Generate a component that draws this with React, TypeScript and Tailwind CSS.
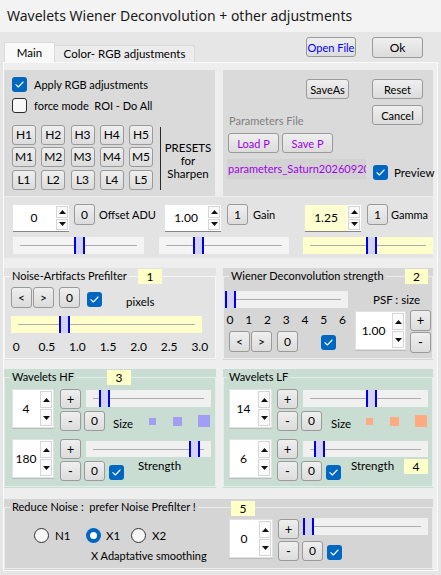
import React from "react";

type P = { className?: string; children?: React.ReactNode };

function Btn({ className = "", children }: P) {
  return (
    <div
      className={`flex shrink-0 items-center justify-center whitespace-nowrap rounded-[3px] border border-[#9a9a9a] bg-linear-to-b from-[#efefef] to-[#dcdcdc] leading-none ${className}`}
    >
      {children}
    </div>
  );
}

function Check({ className = "" }: { className?: string }) {
  return (
    <div
      className={`flex h-[15px] w-[15px] shrink-0 items-center justify-center rounded-[3px] bg-[#0067c0] ${className}`}
    >
      <svg width="9" height="7" viewBox="0 0 9 7" fill="none">
        <path
          d="M0.9 3.7 3.3 6 8.1 1"
          stroke="#ffffff"
          strokeWidth="1.1"
          strokeLinecap="round"
          strokeLinejoin="round"
        />
      </svg>
    </div>
  );
}

function Box({ className = "" }: { className?: string }) {
  return (
    <div
      className={`h-[15px] w-[15px] shrink-0 rounded-[3px] border border-[#2b2b2b] bg-[#f7f7f7] ${className}`}
    />
  );
}

function Radio({ on = false, className = "" }: { on?: boolean; className?: string }) {
  return on ? (
    <div
      className={`flex h-[15px] w-[15px] shrink-0 items-center justify-center rounded-full bg-[#0067c0] ${className}`}
    >
      <div className="h-[7px] w-[7px] rounded-full bg-white" />
    </div>
  ) : (
    <div
      className={`h-[15px] w-[15px] shrink-0 rounded-full border border-[#333333] bg-[#f6f6f6] ${className}`}
    />
  );
}

function Tri({ down = false }: { down?: boolean }) {
  return (
    <svg width="7" height="4" viewBox="0 0 7 4">
      <path d={down ? "M0 0h7L3.5 4z" : "M0 4h7L3.5 0z"} fill="#111111" />
    </svg>
  );
}

function Spin({
  value,
  className = "",
  numClass = "bg-white",
  flat = false,
}: {
  value: string;
  className?: string;
  numClass?: string;
  flat?: boolean;
}) {
  return (
    <div
      className={`flex shrink-0 bg-white ${
        flat ? "border-b border-[#858585]" : "border border-[#e2e2e2] shadow-[0_1px_0_#bdbdbd]"
      } ${className}`}
    >
      <div className={`flex flex-1 items-center justify-center text-[12px] ${numClass}`}>{value}</div>
      <div className="flex w-[14px] flex-col gap-px p-px">
        <div className="flex flex-1 items-center justify-center border border-[#d6d6d6] bg-[#fafafa]">
          <Tri />
        </div>
        <div className="flex flex-1 items-center justify-center border border-[#d6d6d6] bg-[#fafafa]">
          <Tri down />
        </div>
      </div>
    </div>
  );
}

function Slider({ className = "", left }: { className?: string; left: number }) {
  return (
    <div className={`relative flex shrink-0 items-center px-[7px] ${className}`}>
      <div className="h-px flex-1 bg-[#adadad]" />
      <div
        className="absolute bottom-0 top-0 w-[11px] border-x-2 border-[#0000e6] bg-[#d2d2fa]"
        style={{ left }}
      />
    </div>
  );
}

function Badge({ className = "", children }: P) {
  return (
    <div className={`absolute flex items-center justify-center bg-[#ffffc8] text-[12px] ${className}`}>
      {children}
    </div>
  );
}

const presets = ["H1", "H2", "H3", "H4", "H5", "M1", "M2", "M3", "M4", "M5", "L1", "L2", "L3", "L4", "L5"];
const prefilterScale = ["0", "0.5", "1.0", "1.5", "2.0", "2.5", "3.0"];
const wienerScale = ["0", "1", "2", "3", "4", "5", "6"];

function Squares({ color, size }: { color: string; size: string }) {
  return (
    <>
      <span className={`${size} shrink-0`}>Size</span>
      <div className={`h-[7px] w-[7px] shrink-0 ${color}`} />
      <div className={`ml-[17px] h-[9px] w-[9px] shrink-0 ${color}`} />
      <div className={`ml-[16px] h-[12px] w-[12px] shrink-0 ${color}`} />
    </>
  );
}

export default function App() {
  return (
    <div className="flex h-[575px] w-[441px] select-none flex-col overflow-hidden bg-[#e6e6e6] font-['Lato',sans-serif] text-[11px] leading-[14px] text-black">
      {/* window caption */}
      <div className="flex h-[32px] shrink-0 items-center bg-[#f3f3f3] pl-[7px] font-['Noto_Sans',sans-serif] text-[14px] text-[#1a1a1a]">
        Wavelets Wiener Deconvolution + other adjustments
      </div>

      {/* tab strip + top buttons */}
      <div className="flex h-[30px] shrink-0">
        <div className="ml-[4px] flex items-end">
          <div className="flex h-[20px] w-[51px] items-center justify-center border-x border-t border-[#dadada] bg-[#f9f9f9] text-[11.5px]">
            Main
          </div>
          <div className="flex h-[17px] w-[140px] items-center justify-center whitespace-nowrap border-r border-t border-[#dadada] bg-[#ececec] text-[11.5px]">
            Color- RGB adjustments
          </div>
        </div>
        <Btn className="ml-[111px] mt-[5px] h-[20px] w-[50px] text-[#0000ff]">Open File</Btn>
        <Btn className="ml-[16px] mt-[5px] h-[21px] w-[51px] text-[12px]">Ok</Btn>
      </div>

      {/* tab page */}
      <div className="ml-[3px] flex h-[509px] w-[435px] shrink-0 flex-col border border-[#fafafa] bg-[#eeeeee]">
        {/* top panels */}
        <div className="mt-[7px] flex gap-[8px]">
          <div className="flex h-[126px] w-[211px] flex-col bg-[#dadada] pl-[8px] pt-[7px]">
            <div className="flex h-[15px] items-center">
              <Check />
              <span className="ml-[7px] whitespace-nowrap">Apply RGB adjustments</span>
            </div>
            <div className="mt-[6px] flex h-[15px] items-center">
              <Box />
              <span className="ml-[7px] whitespace-pre">force mode  ROI - Do All</span>
            </div>
            <div className="mt-[12px] flex">
              <div className="grid grid-cols-[repeat(5,24px)] gap-x-[5.25px] gap-y-[2px]">
                {presets.map((p) => (
                  <Btn key={p} className="h-[20px] text-[12px]">
                    {p}
                  </Btn>
                ))}
              </div>
              <div className="ml-[7px] mt-[2px] h-[63px] w-px bg-[#2a2a2a]" />
              <div className="flex-1 pt-[16px] text-center text-[11.5px] leading-[13px]">
                PRESETS
                <br />
                for
                <br />
                Sharpen
              </div>
            </div>
          </div>

          <div className="flex h-[126px] w-[210px] bg-[#dadada] pl-[5px]">
            <div className="flex w-[139px] flex-col">
              <Btn className="ml-[78px] mt-[9px] h-[20px] w-[43px]">SaveAs</Btn>
              <div className="ml-px mt-[15px] whitespace-nowrap text-[#808080]">Parameters File</div>
              <div className="mt-[5px] flex gap-[3px]">
                <Btn className="h-[20px] w-[51px] text-[#a000e8]">Load P</Btn>
                <Btn className="h-[20px] w-[51px] text-[#a000e8]">Save P</Btn>
              </div>
              <div className="-ml-px mt-[6px] flex h-[20px] w-[139px] items-center overflow-hidden whitespace-nowrap bg-[#d2d2d2] pl-px text-[#a000e8]">
                parameters_Saturn20260920_1.txt
              </div>
            </div>
            <div className="ml-[5px] flex w-[51px] flex-col">
              <Btn className="mt-[9px] h-[20px] w-[51px]">Reset</Btn>
              <Btn className="mt-[6px] h-[20px] w-[51px]">Cancel</Btn>
              <div className="ml-px mt-[40px] flex items-center">
                <Check />
                <span className="ml-[6px] text-[11.5px]">Preview</span>
              </div>
            </div>
          </div>
        </div>

        {/* offset / gain / gamma */}
        <div className="mt-px flex h-[61px] w-[429px] flex-col bg-[#e3e3e3] pt-[7px]">
          <div className="flex h-[28px] items-start">
            <div className="ml-[9px] flex w-[152px] items-start">
              <Spin flat value="0" className="mt-px h-[27px] w-[56px]" />
              <Btn className="ml-[5px] h-[21px] w-[21px] text-[12px]">0</Btn>
              <span className="ml-[4px] mt-[4px] whitespace-nowrap">Offset ADU</span>
            </div>
            <div className="flex w-[140px] items-start">
              <Spin flat value="1.00" className="mt-px h-[27px] w-[56px]" />
              <Btn className="ml-[6px] h-[21px] w-[21px] text-[12px]">1</Btn>
              <span className="ml-[5px] mt-[4px]">Gain</span>
            </div>
            <div className="flex items-start">
              <Spin flat value="1.25" numClass="bg-[#ffffd2]" className="mt-px h-[27px] w-[56px]" />
              <Btn className="ml-[6px] h-[21px] w-[21px] text-[12px]">1</Btn>
              <span className="ml-[3px] mt-[4px]">Gamma</span>
            </div>
          </div>
          <div className="mt-[5px] flex">
            <Slider left={61} className="ml-[9px] h-[17px] w-[131px] bg-[#f4f4f4]" />
            <Slider left={34} className="ml-[15px] h-[17px] w-[130px] bg-[#f4f4f4]" />
            <Slider left={63} className="ml-[14px] h-[17px] w-[130px] bg-[#ffffcc]" />
          </div>
        </div>

        {/* prefilter + wiener */}
        <div className="mt-[10px] flex gap-[7px]">
          <div className="relative h-[92px] w-[212px] bg-[#e3e3e3]">
            <fieldset className="mt-px h-[90px] min-w-0 border border-[#f7f7f7]">
              <legend className="ml-[5px] whitespace-nowrap px-[2px]">Noise-Artifacts Prefilter</legend>
              <div className="mt-[4px] flex items-start text-[12px]">
                <Btn className="ml-[6px] h-[21px] w-[21px]">&lt;</Btn>
                <Btn className="ml-px h-[21px] w-[21px]">&gt;</Btn>
                <Btn className="ml-[5px] h-[21px] w-[21px]">0</Btn>
                <Check className="ml-[7px] mt-[5px]" />
                <span className="ml-[24px] mt-[8px] text-[11.5px]">pixels</span>
              </div>
              <Slider left={48} className="ml-[6px] mt-[7px] h-[17px] w-[191px] bg-[#ffffcc]" />
              <div className="-ml-[4px] mt-[7px] flex text-[12px]">
                {prefilterScale.map((s) => (
                  <span key={s} className="w-[31px] text-center">
                    {s}
                  </span>
                ))}
              </div>
            </fieldset>
            <Badge className="left-[134px] top-px h-[15px] w-[24px]">1</Badge>
          </div>

          <div className="relative h-[92px] w-[210px] bg-[#d6d6d6]">
            <fieldset className="mt-px h-[90px] min-w-0 border border-[#ececec]">
              <legend className="ml-[5px] whitespace-nowrap px-[2px]">Wiener Deconvolution strength</legend>
              <div className="flex">
                <div className="flex w-[128px] flex-col">
                  <Slider left={0} className="ml-px mt-[8px] h-[17px] w-[123px] bg-[#f0f0f0]" />
                  <div className="-ml-[3.5px] mt-[5px] flex text-[12px]">
                    {wienerScale.map((s) => (
                      <span key={s} className="w-[19px] text-center">
                        {s}
                      </span>
                    ))}
                  </div>
                  <div className="mt-[4px] flex items-start text-[12px]">
                    <Btn className="ml-[5px] h-[21px] w-[21px]">&lt;</Btn>
                    <Btn className="ml-px h-[21px] w-[21px]">&gt;</Btn>
                    <Btn className="ml-[5px] h-[21px] w-[21px]">0</Btn>
                    <Check className="ml-[23px] mt-[4px]" />
                  </div>
                </div>
                <div className="flex flex-col">
                  <span className="ml-[21px] mt-[10px] whitespace-nowrap text-[11.5px]">PSF : size</span>
                  <div className="mt-[4px] flex">
                    <Spin value="1.00" className="ml-[3px] h-[39px] w-[51px]" />
                    <div className="-mt-px ml-[4px] flex flex-col gap-px text-[13px]">
                      <Btn className="h-[21px] w-[21px]">+</Btn>
                      <Btn className="h-[21px] w-[21px]">-</Btn>
                    </div>
                  </div>
                </div>
              </div>
            </fieldset>
            <Badge className="left-[182px] top-px h-[15px] w-[23px]">2</Badge>
          </div>
        </div>

        {/* wavelets */}
        <div className="mt-[9px] flex gap-[7px]">
          <div className="relative h-[119px] w-[212px] bg-[#c9ddd3]">
            <fieldset className="mt-px h-[117px] min-w-0 border border-[#e2eee8]">
              <legend className="ml-[5px] whitespace-nowrap px-[2px]">Wavelets HF</legend>
              <div className="mt-[5px] flex items-start">
                <Spin value="4" className="ml-[7px] h-[39px] w-[42px]" />
                <div className="ml-[6px] flex flex-col">
                  <div className="flex items-start">
                    <Btn className="h-[20px] w-[21px] text-[13px]">+</Btn>
                    <Slider left={13} className="ml-[5px] mt-px h-[17px] w-[125px] bg-[#f0f0f0]" />
                  </div>
                  <div className="mt-[2px] flex items-center">
                    <Btn className="h-[20px] w-[21px] text-[13px]">-</Btn>
                    <Btn className="ml-[3px] h-[20px] w-[21px] text-[12px]">0</Btn>
                    <div className="ml-[8px]" />
                    <Squares color="bg-[#a29ef5]" size="w-[36px] pt-[5px] text-[11.5px]" />
                  </div>
                </div>
              </div>
              <div className="mt-[8px] flex items-start">
                <Spin value="180" className="ml-[7px] h-[39px] w-[42px]" />
                <div className="ml-[6px] flex flex-col">
                  <div className="flex items-start">
                    <Btn className="h-[20px] w-[21px] text-[13px]">+</Btn>
                    <Slider left={103} className="ml-[5px] mt-[2px] h-[16px] w-[125px] bg-[#f0f0f0]" />
                  </div>
                  <div className="mt-[2px] flex items-start">
                    <Btn className="h-[20px] w-[21px] text-[13px]">-</Btn>
                    <Btn className="ml-[3px] h-[20px] w-[21px] text-[12px]">0</Btn>
                    <Check className="ml-[4px] mt-[4px]" />
                    <span className="-mt-[2px] ml-[14px] text-[11.5px]">Strength</span>
                  </div>
                </div>
              </div>
            </fieldset>
            <Badge className="left-[103px] top-px h-[15px] w-[24px]">3</Badge>
          </div>

          <div className="relative h-[119px] w-[210px] bg-[#c9ddd3]">
            <fieldset className="mt-px h-[117px] min-w-0 border border-[#e2eee8]">
              <legend className="ml-[3px] whitespace-nowrap px-[2px]">Wavelets LF</legend>
              <div className="mt-[5px] flex items-start">
                <Spin value="14" className="ml-[5px] h-[39px] w-[43px]" />
                <div className="ml-[5px] flex flex-col">
                  <div className="flex items-start">
                    <Btn className="h-[20px] w-[21px] text-[13px]">+</Btn>
                    <Slider left={63} className="ml-[5px] mt-px h-[17px] w-[125px] bg-[#f0f0f0]" />
                  </div>
                  <div className="mt-[2px] flex items-center">
                    <Btn className="h-[20px] w-[21px] text-[13px]">-</Btn>
                    <Btn className="ml-[3px] h-[20px] w-[21px] text-[12px]">0</Btn>
                    <div className="ml-[9px]" />
                    <Squares color="bg-[#ffaa80]" size="w-[35px] pt-[5px] text-[11.5px]" />
                  </div>
                </div>
              </div>
              <div className="mt-[8px] flex items-start">
                <Spin value="6" className="ml-[5px] h-[39px] w-[43px]" />
                <div className="ml-[5px] flex flex-col">
                  <div className="flex items-start">
                    <Btn className="h-[20px] w-[21px] text-[13px]">+</Btn>
                    <Slider left={11} className="ml-[5px] mt-[2px] h-[16px] w-[125px] bg-[#f0f0f0]" />
                  </div>
                  <div className="mt-[2px] flex items-start">
                    <Btn className="h-[20px] w-[21px] text-[13px]">-</Btn>
                    <Btn className="ml-[3px] h-[20px] w-[21px] text-[12px]">0</Btn>
                    <Check className="ml-[4px] mt-[4px]" />
                    <span className="-mt-[2px] ml-[10px] text-[11.5px]">Strength</span>
                  </div>
                </div>
              </div>
            </fieldset>
            <Badge className="left-[181px] top-[90px] h-[15px] w-[24px]">4</Badge>
          </div>
        </div>

        {/* reduce noise */}
        <div className="relative mt-[11px] h-[71px] w-[429px] bg-[#d5d5d5]">
          <fieldset className="mt-px h-[69px] min-w-0 border border-[#ececec]">
            <legend className="ml-[5px] whitespace-pre px-[2px]">Reduce Noise :  prefer Noise Prefilter !</legend>
            <div className="flex items-start">
              <div className="flex w-[224px] flex-col">
                <div className="mt-[14px] flex h-[15px] items-center text-[11.5px]">
                  <Radio className="ml-[29px]" />
                  <span className="ml-[6px] w-[31px]">N1</span>
                  <Radio on />
                  <span className="ml-[5px] w-[25px]">X1</span>
                  <Radio />
                  <span className="ml-[6px]">X2</span>
                </div>
                <span className="ml-[86px] mt-[6px] whitespace-nowrap">X Adaptative smoothing</span>
              </div>
              <Spin value="0" className="mt-[5px] h-[39px] w-[44px]" />
              <div className="ml-[5px] mt-[5px] flex flex-col">
                <div className="flex items-start">
                  <Btn className="h-[20px] w-[21px] text-[13px]">+</Btn>
                  <Slider left={0} className="-mt-px ml-[4px] h-[17px] w-[125px] bg-[#f0f0f0]" />
                </div>
                <div className="mt-[2px] flex items-start">
                  <Btn className="h-[20px] w-[21px] text-[13px]">-</Btn>
                  <Btn className="ml-[3px] h-[20px] w-[21px] text-[12px]">0</Btn>
                  <Check className="ml-[4px] mt-[4px]" />
                </div>
              </div>
            </div>
          </fieldset>
          <Badge className="left-[227px] top-[2px] h-[15px] w-[24px]">5</Badge>
        </div>
      </div>
    </div>
  );
}
